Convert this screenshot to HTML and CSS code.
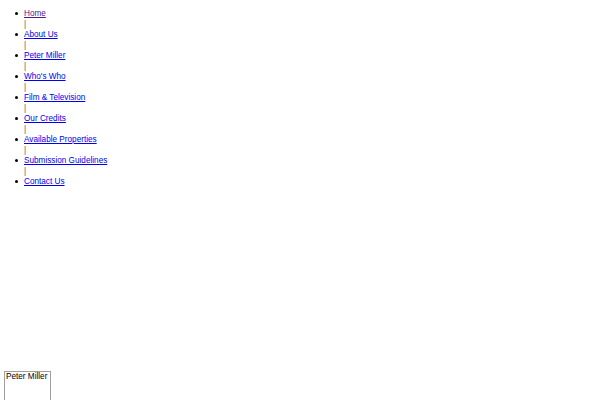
FILE: index.html
```html
<!DOCTYPE html>
<html>
<head>
<meta charset="utf-8">
<link rel="stylesheet" href="styles.css">
</head>
<body>
<ul class="nav">
<li class="item"><a class="visited" href="#">Home</a></li>
<li class="sep">|</li>
<li class="item"><a href="#">About Us</a></li>
<li class="sep">|</li>
<li class="item"><a href="#">Peter Miller</a></li>
<li class="sep">|</li>
<li class="item"><a href="#">Who's Who</a></li>
<li class="sep">|</li>
<li class="item"><a href="#">Film &amp; Television</a></li>
<li class="sep">|</li>
<li class="item"><a href="#">Our Credits</a></li>
<li class="sep">|</li>
<li class="item"><a href="#">Available Properties</a></li>
<li class="sep">|</li>
<li class="item"><a href="#">Submission Guidelines</a></li>
<li class="sep">|</li>
<li class="item"><a href="#">Contact Us</a></li>
</ul>
<div class="box">Peter Miller</div>
</body>
</html>
```
FILE: styles.css
```css
html, body {
  margin: 0;
  padding: 0;
}
body {
  font-family: "Liberation Sans", Arial, sans-serif;
  font-size: 8.2px;
  line-height: 10.5px;
  color: #000;
  background: #fff;
  padding: 9px 8px 8px;
}
.nav {
  margin: 0;
  padding-left: 16px;
  list-style: none;
}
.item {
  position: relative;
}
.item::before {
  content: "";
  position: absolute;
  left: -9px;
  top: 3px;
  width: 3px;
  height: 3px;
  border-radius: 50%;
  background: #000;
}
.nav a {
  color: #0000ee;
  text-decoration: underline;
}
.nav a.visited {
  color: #551a8b;
}
.sep {
  color: #555;
}
.box {
  margin-top: 183px;
  margin-left: -4px;
  width: 44px;
  height: 40px;
  border: 1px solid #a0a0a0;
  padding: 0 0 0 1px;
  white-space: nowrap;
  overflow: hidden;
}
```
